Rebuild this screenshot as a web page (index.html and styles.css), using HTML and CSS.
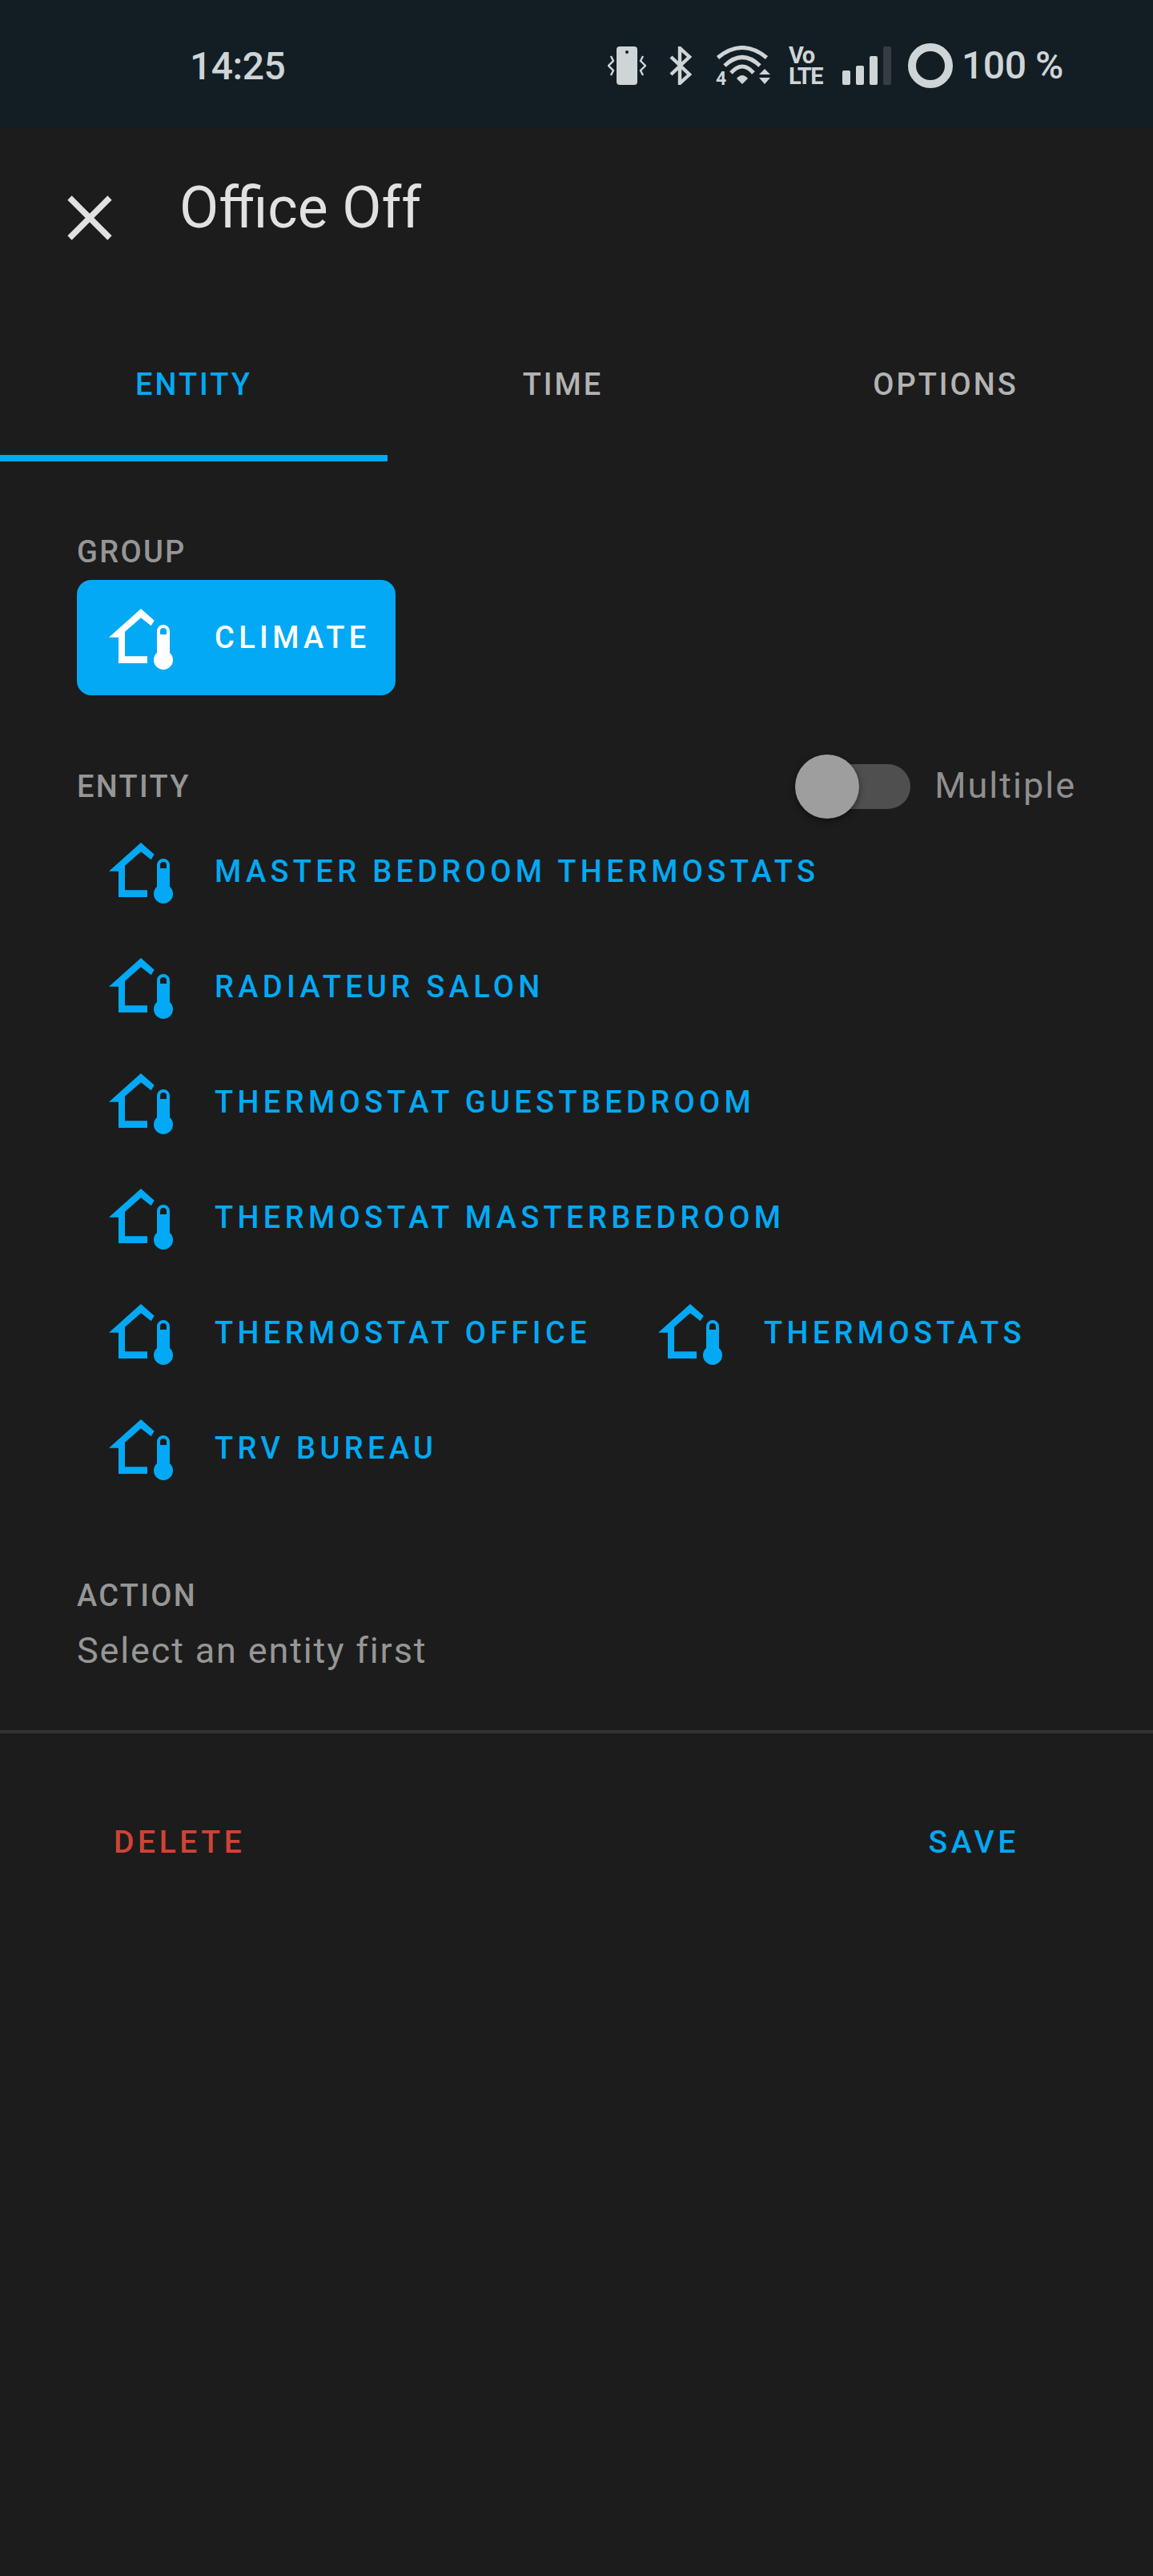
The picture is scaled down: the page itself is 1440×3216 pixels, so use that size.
FILE: index.html
```html
<!DOCTYPE html>
<html lang="en">
<head>
    <meta charset="UTF-8">
    <meta name="viewport" content="width=device-width, initial-scale=1.0">
    <title>Office Off</title>
    <link rel="stylesheet" href="styles.css">
</head>
<body>
    <svg class="defs" width="0" height="0">
        <symbol id="home-thermo" viewBox="0 0 80 76">
            <path d="M40 0L56.7 14.7L52.7 21.3L40 11.3L20 28.7V59.3H48V68H12V35.7H0Z"/>
            <path fill-rule="evenodd" d="M68 20a8 8 0 0 1 8 8V55a12 12 0 1 1-16 0V28a8 8 0 0 1 8-8ZM64 32H72V28a4 4 0 0 0-8 0Z"/>
        </symbol>
    </svg>

    <div class="statusbar">
        <span class="clock">14:25</span>
        <div class="status-icons">
            <svg class="ic-vibrate" viewBox="0 0 48 48">
                <rect x="11" y="0" width="26" height="48" rx="4" fill="#cfd4d6"/>
                <circle cx="24" cy="7" r="2" fill="#121e24"/>
                <polyline points="4,12 7,18 1,24 7,30 4,36" fill="none" stroke="#cfd4d6" stroke-width="2.4"/>
                <polyline points="44,12 41,18 47,24 41,30 44,36" fill="none" stroke="#cfd4d6" stroke-width="2.4"/>
            </svg>
            <svg class="ic-bt" viewBox="0 0 28 48">
                <path d="M2 13L25 35L13 46V2L25 13L2 35" fill="none" stroke="#cfd4d6" stroke-width="4.4"/>
            </svg>
            <svg class="ic-wifi" viewBox="0 0 68 58">
                <g fill="none" stroke="#cfd4d6" stroke-width="5">
                    <path d="M2.5 15Q33 -10 63.5 15"/>
                    <path d="M11 25Q33 4 55 25"/>
                    <path d="M19 34Q33 18 47 34"/>
                </g>
                <path d="M26 41Q33 33 40 41L33 48Z" fill="#cfd4d6"/>
                <path d="M61 29L68 36H54ZM54 40H68L61 48Z" fill="#cfd4d6"/>
                <text class="wifi-4" x="0" y="49">4</text>
            </svg>
            <div class="volte">Vo<br>LTE</div>
            <div class="signal">
                <i class="bar b1"></i><i class="bar b2"></i><i class="bar b3"></i><i class="bar b4"></i>
            </div>
            <div class="ring"></div>
            <span class="battery">100 %</span>
        </div>
    </div>

    <div class="header">
        <svg class="close" viewBox="0 0 56 56">
            <path d="M3 3L53 53M53 3L3 53" stroke="#e1e1e1" stroke-width="7.5" fill="none"/>
        </svg>
        <h1>Office Off</h1>
    </div>

    <div class="tabs">
        <div class="tab active">ENTITY</div>
        <div class="tab">TIME</div>
        <div class="tab">OPTIONS</div>
    </div>

    <div class="content">
        <div class="label">GROUP</div>
        <div class="chips">
            <div class="chip selected"><svg class="chip-icon"><use href="#home-thermo"/></svg><span>CLIMATE</span></div>
        </div>

        <div class="entity-head">
            <div class="label">ENTITY</div>
            <div class="multi">
                <div class="switch"><div class="thumb"></div></div>
                <span class="multi-text">Multiple</span>
            </div>
        </div>
        <div class="chips">
            <div class="chip"><svg class="chip-icon"><use href="#home-thermo"/></svg><span>MASTER BEDROOM THERMOSTATS</span></div>
            <div class="chip"><svg class="chip-icon"><use href="#home-thermo"/></svg><span>RADIATEUR SALON</span></div>
            <div class="chip"><svg class="chip-icon"><use href="#home-thermo"/></svg><span>THERMOSTAT GUESTBEDROOM</span></div>
            <div class="chip"><svg class="chip-icon"><use href="#home-thermo"/></svg><span>THERMOSTAT MASTERBEDROOM</span></div>
            <div class="chip"><svg class="chip-icon"><use href="#home-thermo"/></svg><span>THERMOSTAT OFFICE</span></div>
            <div class="chip"><svg class="chip-icon"><use href="#home-thermo"/></svg><span>THERMOSTATS</span></div>
            <div class="chip"><svg class="chip-icon"><use href="#home-thermo"/></svg><span>TRV BUREAU</span></div>
        </div>

        <div class="label action-label">ACTION</div>
        <div class="hint">Select an entity first</div>
    </div>

    <div class="footer">
        <span class="btn delete">DELETE</span>
        <span class="btn save">SAVE</span>
    </div>
</body>
</html>
```

FILE: styles.css
```css
body {
    font-family: 'Roboto', sans-serif;
    background-color: #1c1c1c;
    color: #e1e1e1;
    margin: 0;
    height: 3216px;
    overflow: hidden;
}
.defs {
    display: block;
    height: 0;
}
.statusbar {
    height: 160px;
    box-sizing: border-box;
    padding: 4px 112px 0 237px;
    background-color: #121e24;
    color: #cfd4d6;
    display: flex;
    align-items: center;
    justify-content: space-between;
    font-size: 48px;
    font-weight: 500;
}
.clock {
    letter-spacing: -0.5px;
}
.status-icons {
    display: flex;
    align-items: center;
}
.ic-vibrate {
    width: 48px;
    height: 48px;
}
.ic-bt {
    width: 28px;
    height: 48px;
    margin-left: 29px;
}
.ic-wifi {
    width: 68px;
    height: 58px;
    margin-left: 30px;
    margin-bottom: -8px;
}
.wifi-4 {
    font-size: 23px;
    font-weight: 700;
    fill: #cfd4d6;
}
.volte {
    width: 42px;
    margin-left: 23px;
    font-size: 29px;
    font-weight: 700;
    line-height: 26px;
    letter-spacing: -1.5px;
    white-space: nowrap;
}
.signal {
    display: flex;
    align-items: flex-end;
    gap: 7px;
    height: 48px;
    margin-left: 25px;
}
.bar {
    width: 10px;
    border-radius: 2px;
    background-color: #cfd4d6;
}
.b1 { height: 18px; }
.b2 { height: 24px; }
.b3 { height: 36px; }
.b4 { height: 48px; background-color: #333d42; }
.ring {
    width: 56px;
    height: 56px;
    box-sizing: border-box;
    margin-left: 21px;
    border: 10px solid #cfd4d6;
    border-radius: 50%;
}
.battery {
    margin-left: 11px;
    line-height: 56px;
    letter-spacing: -0.4px;
}
.header {
    height: 240px;
    position: relative;
}
.close {
    position: absolute;
    left: 84px;
    top: 84px;
    width: 56px;
    height: 56px;
}
h1 {
    margin: 0;
    padding: 60px 0 0 224px;
    font-size: 71.5px;
    font-weight: 400;
    line-height: 80px;
}
.tabs {
    display: grid;
    grid-template-columns: 484px 438px 518px;
    height: 176px;
}
.tab {
    display: flex;
    align-items: center;
    justify-content: center;
    padding-bottom: 16px;
    box-sizing: border-box;
    font-size: 38px;
    font-weight: 500;
    letter-spacing: 3px;
    color: #b3b3b3;
}
.tab.active {
    color: #03a9f4;
    border-bottom: 8px solid #03a9f4;
    padding-bottom: 8px;
}
.content {
    padding: 91px 96px 0;
}
.label {
    font-size: 38px;
    font-weight: 500;
    line-height: 44px;
    letter-spacing: 2.3px;
    color: #969696;
}
.chips {
    display: flex;
    flex-wrap: wrap;
    column-gap: 13px;
    margin-top: 13px;
}
.chip {
    display: flex;
    align-items: center;
    height: 144px;
    box-sizing: border-box;
    padding: 0 31px 0 40px;
    border-radius: 18px;
    font-size: 38px;
    font-weight: 500;
    letter-spacing: 5.35px;
    color: #03a9f4;
}
.chip.selected {
    background-color: #03a9f4;
    color: #fff;
}
.chip-icon {
    width: 80px;
    height: 76px;
    margin: 4px 52px 0 0;
    fill: currentColor;
}
.entity-head {
    display: flex;
    align-items: center;
    justify-content: space-between;
    height: 66px;
    margin-top: 81px;
}
.entity-head + .chips {
    margin-top: 1px;
}
.multi {
    display: flex;
    align-items: center;
    font-size: 45px;
    letter-spacing: 2px;
    color: #8f8f8f;
}
.multi-text {
    margin-bottom: 3px;
}
.switch {
    position: relative;
    width: 132px;
    height: 56px;
    margin-right: 30px;
    border-radius: 28px;
    background-color: #4f4f4f;
}
.thumb {
    position: absolute;
    left: -12px;
    top: -12px;
    width: 80px;
    height: 80px;
    border-radius: 50%;
    background-color: #9e9e9e;
    box-shadow: 0 3px 8px rgba(0,0,0,0.45);
}
.action-label {
    margin-top: 90px;
}
.hint {
    margin-top: 22px;
    font-size: 45px;
    line-height: 50px;
    letter-spacing: 1.85px;
    color: #969696;
}
.footer {
    display: flex;
    justify-content: space-between;
    margin-top: 74px;
    padding: 114px 167px 0 142px;
    border-top: 4px solid #333;
}
.btn {
    font-size: 39px;
    font-weight: 500;
    line-height: 44px;
    letter-spacing: 4.6px;
}
.delete {
    color: #cf4436;
}
.save {
    color: #03a9f4;
}
```
